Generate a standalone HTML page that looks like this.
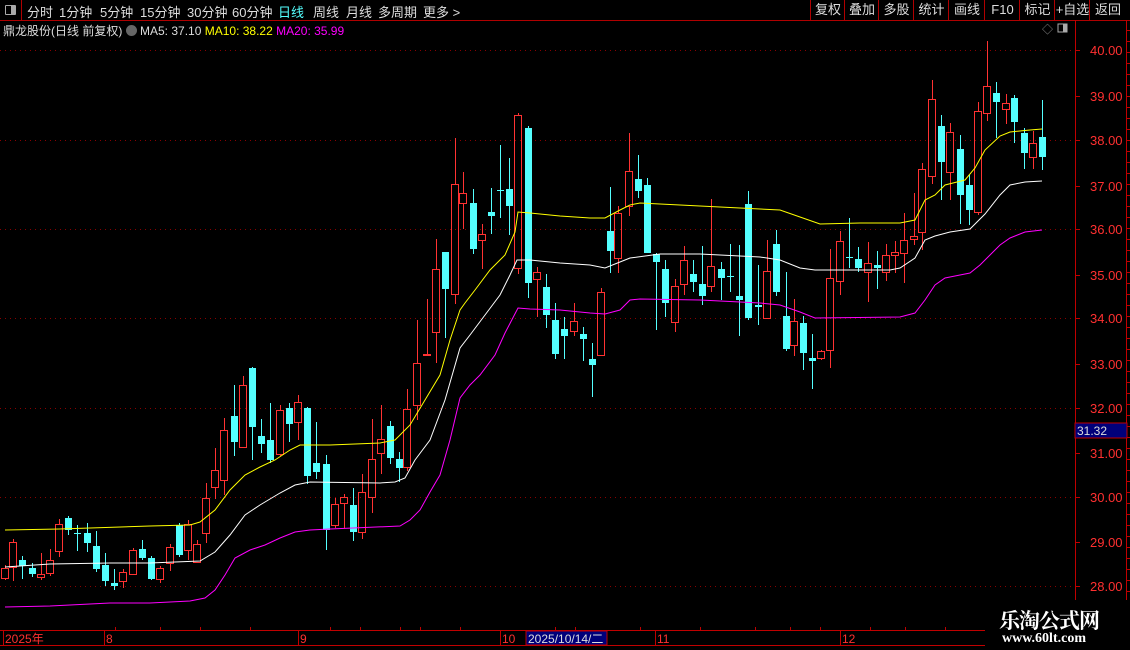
<!DOCTYPE html>
<html><head><meta charset="utf-8"><style>
html,body{margin:0;padding:0;background:#000;width:1130px;height:650px;overflow:hidden;font-family:"Liberation Sans","Noto Sans CJK SC",sans-serif;}
#top{position:absolute;left:0;top:0;width:1130px;height:20px;border-bottom:1px solid #b00000;}
.t{position:absolute;top:2px;font-size:13px;color:#ddd;}
.b{position:absolute;top:0;height:20px;border-left:1px solid #b00000;font-size:13px;color:#ddd;text-align:center;line-height:20px;}
#info{position:absolute;top:22px;left:3px;font-size:12px;color:#ddd;white-space:nowrap;}
svg{position:absolute;left:0;top:0;}
</style></head><body>
<div id="top">
<div style="position:absolute;left:0;top:0;width:21px;height:20px;border-right:1px solid #b00000"><div style="position:absolute;left:5px;top:5px;width:9px;height:8px;border:1px solid #aaa;border-radius:1px"><div style="position:absolute;right:0;top:0;width:4px;height:8px;background:#aaa"></div></div></div>
<span class="t" style="left:27px">分时</span><span class="t" style="left:59px">1分钟</span><span class="t" style="left:100px">5分钟</span><span class="t" style="left:140px">15分钟</span><span class="t" style="left:187px">30分钟</span><span class="t" style="left:232px">60分钟</span><span class="t" style="left:278px;color:#5ff">日线</span><span class="t" style="left:313px">周线</span><span class="t" style="left:346px">月线</span><span class="t" style="left:378px">多周期</span><span class="t" style="left:423px">更多 &gt;</span>
<div class="b" style="left:810px;width:34px">复权</div><div class="b" style="left:844px;width:34px">叠加</div><div class="b" style="left:878px;width:35px">多股</div><div class="b" style="left:913px;width:35px">统计</div><div class="b" style="left:948px;width:36px">画线</div><div class="b" style="left:984px;width:35px">F10</div><div class="b" style="left:1019px;width:35px">标记</div><div class="b" style="left:1054px;width:35px">+自选</div><div class="b" style="left:1089px;width:36px">返回</div>
</div>
<div id="info">鼎龙股份(日线 前复权) <span style="display:inline-block;width:11px;height:11px;border-radius:6px;background:#666;vertical-align:-1px"></span> MA5: 37.10 <span style="color:#ff0">MA10: 38.22</span> <span style="color:#f0f">MA20: 35.99</span></div>
<svg id="s" width="1130" height="650"></svg>
<div style="position:absolute;left:999px;top:605px;color:#fff;font-family:'Noto Serif CJK SC',serif;font-weight:bold;font-size:21px;letter-spacing:-1px">乐淘公式网</div>
<div style="position:absolute;left:1002px;top:631px;color:#fff;font-family:'Liberation Serif',serif;font-weight:bold;font-size:14px">www.60lt.com</div>
<script>
var s='';
function L(x1,y1,x2,y2,c,e){s+='<line x1="'+x1+'" y1="'+y1+'" x2="'+x2+'" y2="'+y2+'" stroke="'+c+'" '+(e||'')+'/>';}
[50,140,229,318,408,497,586].forEach(function(y){L(0,y+.5,1075,y+.5,'#8a0000','stroke-dasharray="1,4"');});
L(1075.5,20,1075.5,600,'#c00000');L(1126.5,20,1126.5,600,'#c00000');
var labs=[[40,50],[39,96],[38,140],[37,186],[36,229],[35,275],[34,318],[33,364],[32,408],[31,453],[30,497],[29,542],[28,586]];
labs.forEach(function(a){L(1075,a[1]+.5,1080,a[1]+.5,'#c00000');s+='<text x="1090" y="'+(a[1]+5)+'" fill="#ff3030" font-size="13" font-family="Liberation Sans">'+a[0].toFixed(2)+'</text>';});
for(var y=30;y<600;y+=11)L(1126,y+.5,1130,y+.5,'#c00000');
s+='<rect x="1075" y="423" width="52" height="15" fill="#00007a" stroke="#c00000"/><text x="1077" y="435" fill="#ddd" font-size="12" font-family="Liberation Sans">31.32</text>';
s+='<text x="1042" y="33" fill="#888" font-size="11">◇</text><rect x="1058" y="24" width="9" height="8" fill="none" stroke="#aaa"/><rect x="1063" y="24" width="4" height="8" fill="#aaa"/>';
var C=[[5,'r',568,578,565,580],[13,'r',542,567,539,581],[22,'g',560,566,556,579],[32,'g',568,574,563,577],[41,'r',574,577,553,580],[50,'r',560,573,549,576],[59,'r',524,551,519,557],[68,'g',518,530,516,535],[77,'g',533,534,525,551],[87,'g',533,543,523,552],[96,'g',546,569,531,572],[105,'g',565,581,553,586],[114,'g',583,586,569,590],[123,'r',572,581,569,588],[133,'r',550,574,548,575],[142,'g',549,558,540,560],[151,'g',558,579,556,580],[160,'r',568,579,566,583],[170,'r',547,563,544,571],[179,'g',525,555,523,557],[188,'r',524,550,520,560],[197,'r',544,562,540,563],[206,'r',498,533,483,543],[215,'r',470,487,448,499],[224,'r',430,480,418,495],[234,'g',416,442,385,456],[243,'r',385,447,376,448],[252,'g',368,427,367,460],[261,'g',436,444,419,453],[270,'g',440,460,403,463],[280,'r',410,454,405,456],[289,'g',408,424,403,442],[298,'r',402,422,395,440],[307,'g',408,476,407,484],[316,'g',463,472,422,479],[326,'g',464,530,455,550],[335,'r',504,525,498,528],[344,'r',497,503,494,528],[353,'g',505,532,488,541],[362,'r',492,532,474,539],[372,'r',459,497,419,513],[381,'r',439,453,405,474],[390,'g',426,458,421,464],[399,'g',459,468,452,482],[407,'r',409,467,389,471],[417,'r',363,405,320,420],[427,'r',354,355,299,355],[436,'r',269,332,239,363],[445,'g',252,289,252,338],[455,'r',184,294,138,304],[463,'r',193,203,172,229],[473,'g',203,249,189,254],[482,'r',234,240,224,269],[491,'g',212,216,188,234],[500,'g',190,191,145,218],[509,'g',189,206,158,235],[518,'r',115,268,113,274],[528,'g',128,283,126,298],[537,'r',272,279,267,317],[546,'g',287,315,274,328],[555,'g',320,354,303,359],[564,'g',329,336,317,359],[574,'r',321,331,303,336],[583,'g',334,339,327,361],[592,'g',359,365,343,397],[601,'r',292,355,288,355],[610,'g',231,251,187,273],[618,'r',213,258,206,273],[629,'r',171,206,133,216],[638,'g',179,191,155,198],[647,'g',185,253,178,253],[656,'g',254,262,253,330],[665,'g',269,303,260,317],[675,'r',286,322,279,332],[684,'r',260,284,246,295],[693,'g',274,282,260,292],[702,'g',284,296,246,305],[711,'r',266,286,199,292],[721,'g',269,278,262,300],[730,'g',276,277,244,292],[739,'g',296,300,245,336],[748,'g',204,318,191,320],[758,'g',305,307,265,325],[767,'r',271,318,240,318],[776,'g',244,292,230,296],[786,'g',316,349,272,351],[794,'r',321,345,299,356],[803,'g',323,353,316,370],[812,'g',358,361,334,389],[821,'r',351,358,350,360],[830,'r',278,350,249,368],[840,'r',241,281,231,295],[849,'g',257,258,218,268],[858,'g',259,268,247,272],[868,'r',263,272,242,302],[877,'g',265,268,251,289],[886,'r',255,272,244,281],[895,'r',252,255,241,273],[904,'r',240,253,213,283],[914,'r',236,239,193,245],[922,'r',169,232,163,250],[932,'r',99,176,80,184],[941,'g',126,162,115,200],[950,'r',132,172,123,200],[960,'g',149,195,135,224],[969,'g',185,210,175,225],[978,'r',111,212,102,215],[987,'r',86,113,41,121],[996,'g',93,102,82,138],[1006,'r',103,109,94,124],[1014,'g',98,122,95,143],[1024,'g',133,153,128,169],[1033,'r',143,157,131,169],[1042,'g',137,157,100,170]];
C.forEach(function(k){var x=k[0],col=k[1]=='r'?'#ff3232':'#54ffff';
if(k[1]=='r'){L(x+.5,k[4],x+.5,k[2],col);L(x+.5,k[3],x+.5,k[5],col);s+='<rect x="'+(x-3.5)+'" y="'+(k[2]+.5)+'" width="7" height="'+Math.max(1,k[3]-k[2])+'" fill="none" stroke="'+col+'"/>';}
else{L(x+.5,k[4],x+.5,k[5],col);s+='<rect x="'+(x-3)+'" y="'+k[2]+'" width="7" height="'+Math.max(1,k[3]-k[2])+'" fill="'+col+'"/>';}});
function P(pts,c){s+='<polyline fill="none" stroke="'+c+'" stroke-width="1" points="'+pts+'"/>';}
P('5,530 60,529 150,526 190,525 200,522 215,510 230,490 245,475 260,467 275,460 290,450 300,445 330,445 380,443 395,440 410,425 425,400 440,375 450,340 460,310 465,303 475,290 490,270 505,255 515,232 518,212 530,213 560,216 590,218 605,218 620,210 630,205 640,203 660,204 700,206 740,208 760,209 780,210 800,217 820,224 860,223 900,223 915,220 925,200 935,195 945,185 965,180 975,168 985,150 1000,136 1010,132 1030,130 1042,129','#ffff00');
P('5,567 50,564 110,563 150,563 200,561 215,552 230,535 245,515 260,505 280,493 295,485 310,482 380,483 395,482 405,478 415,460 430,440 445,400 460,348 470,335 485,315 500,295 510,275 517,260 530,260 560,263 590,265 605,268 620,262 630,258 660,254 700,254 740,256 760,257 780,260 800,268 815,270 890,270 900,268 915,258 925,240 935,236 950,232 970,229 985,214 1000,195 1010,185 1025,182 1042,181','#ffffff');
P('5,607 50,606 110,603 150,603 190,601 205,598 215,590 225,575 235,558 250,550 265,545 280,538 295,532 310,530 330,529 400,526 410,520 420,510 430,492 440,475 450,440 460,398 470,385 480,375 495,355 505,333 518,308 530,309 560,310 590,313 605,314 620,310 630,300 640,299 700,300 740,302 760,303 780,305 800,312 815,318 900,317 915,313 925,300 935,285 945,278 960,275 970,273 980,265 990,255 1000,245 1010,238 1025,232 1042,230','#ff00ff');
L(0,630.5,985,630.5,'#c00000');L(0,645.5,985,645.5,'#c00000');
[115,160,200,250,330,360,400,420,460,555,575,640,700,755,790,820,870,905,945].forEach(function(x){L(x+.5,627,x+.5,631,'#c00000');});
[[3,'2025年'],[104,'8'],[298,'9'],[500,'10'],[655,'11'],[840,'12']].forEach(function(a){L(a[0]+.5,631,a[0]+.5,645,'#c00000');s+='<text x="'+(a[0]+2)+'" y="643" fill="#ff3030" font-size="12" font-family="Liberation Sans,Noto Sans CJK SC">'+a[1]+'</text>';});
s+='<rect x="526" y="631" width="81" height="14" fill="#00007a" stroke="#c00000"/><text x="528" y="643" fill="#ddd" font-size="12" font-family="Liberation Sans,Noto Sans CJK SC">2025/10/14/二</text>';
document.getElementById('s').innerHTML=s;
</script>
</body></html>
